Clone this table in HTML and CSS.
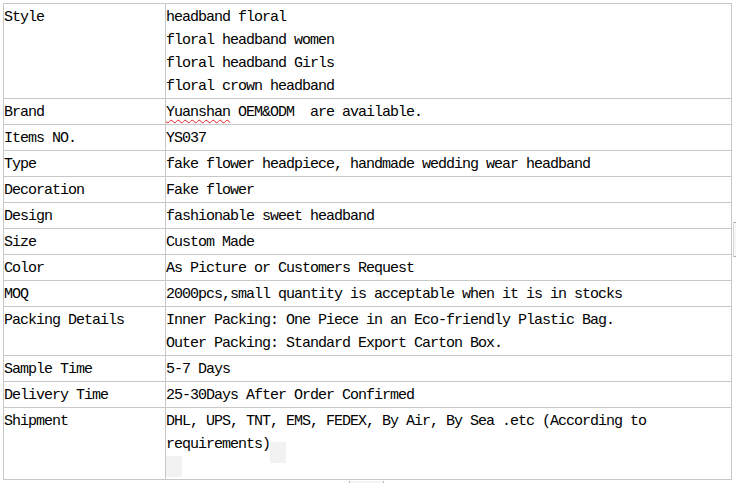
FILE: index.html
```html
<!DOCTYPE html>
<html>
<head>
<meta charset="utf-8">
<link rel="stylesheet" href="styles.css">
</head>
<body>
<div class="page">
  <div class="row">
    <table class="spec">
      <tr><td class="k">Style</td><td class="v">headband floral<br>floral headband women<br>floral headband Girls<br>floral crown headband</td></tr>
      <tr><td class="k">Brand</td><td class="v"><span class="spell">Yuanshan</span> OEM&amp;ODM&nbsp; are available.</td></tr>
      <tr><td class="k">Items NO.</td><td class="v">YS037</td></tr>
      <tr><td class="k">Type</td><td class="v">fake flower headpiece, handmade wedding wear headband</td></tr>
      <tr><td class="k">Decoration</td><td class="v">Fake flower</td></tr>
      <tr><td class="k">Design</td><td class="v">fashionable sweet headband</td></tr>
      <tr><td class="k">Size</td><td class="v">Custom Made</td></tr>
      <tr><td class="k">Color</td><td class="v">As Picture or Customers Request</td></tr>
      <tr><td class="k">MOQ</td><td class="v">2000pcs,small quantity is acceptable when it is in stocks</td></tr>
      <tr><td class="k">Packing Details</td><td class="v">Inner Packing: One Piece in an Eco-friendly Plastic Bag.<br>Outer Packing: Standard Export Carton Box.</td></tr>
      <tr><td class="k">Sample Time</td><td class="v">5-7 Days</td></tr>
      <tr><td class="k">Delivery Time</td><td class="v">25-30Days After Order Confirmed</td></tr>
      <tr><td class="k">Shipment</td><td class="v">DHL, UPS, TNT, EMS, FEDEX, By Air, By Sea .etc (According to<br>requirements)<span class="shade shade-low"></span><br><span class="shade"></span></td></tr>
    </table>
    <div class="edge"></div>
  </div>
  <div class="foot"></div>
</div>
</body>
</html>
```

FILE: styles.css
```css
html, body {
  margin: 0;
  padding: 0;
  background: #ffffff;
}

.page {
  padding: 3px 0 0 3px;
}

.row {
  display: flex;
  align-items: flex-start;
}

.spec {
  flex-shrink: 0;
  border-collapse: separate;
  border-spacing: 0;
  table-layout: fixed;
  border-top: 1px solid #c8c8c8;
  border-left: 1px solid #c8c8c8;
  font-family: "Liberation Mono", monospace;
  font-size: 15px;
  letter-spacing: -1px;
  line-height: 23px;
  color: #000000;
}

.spec td {
  padding: 2px 0 0 0;
  vertical-align: top;
  border-right: 1px solid #c8c8c8;
  border-bottom: 1px solid #c8c8c8;
  white-space: nowrap;
  overflow: hidden;
}

.spec td.k {
  width: 161px;
}

.spec td.v {
  width: 565px;
}

.spell {
  text-decoration: underline wavy #e02020;
  text-decoration-thickness: 1px;
  text-underline-offset: 3px;
}

.shade {
  display: inline-block;
  width: 16px;
  height: 21px;
  background: #f2f2f2;
  vertical-align: top;
  margin-top: 0;
  margin-bottom: -21px;
}

.shade-low {
  margin-top: 9px;
  margin-bottom: -30px;
}

.edge {
  margin-top: 219px;
  margin-left: 1px;
  width: 6px;
  height: 33px;
  border-top: 1px solid #b0b0b0;
  border-bottom: 1px solid #b0b0b0;
  border-left: 1px solid #d8d8d8;
  background: #f7f7f7;
}

.foot {
  margin: 1px 0 0 346px;
  width: 33px;
  height: 6px;
  border-left: 1px solid #b8b8b8;
  border-right: 1px solid #b8b8b8;
  background: #f5f5f5;
}
```
